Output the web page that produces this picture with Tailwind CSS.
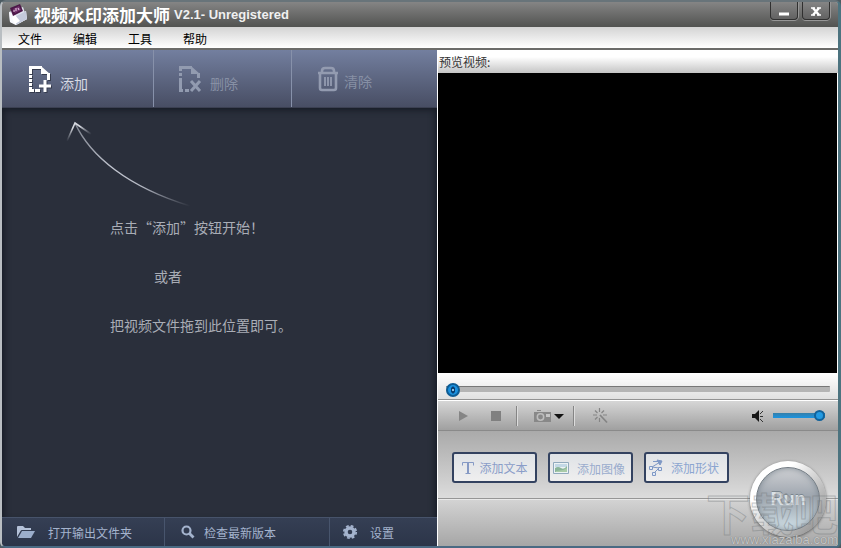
<!DOCTYPE html>
<html lang="zh-CN">
<head>
<meta charset="utf-8">
<meta name="viewport" content="width=device-width, initial-scale=1">
<title>视频水印添加大师 V2.1- Unregistered</title>
<script src="https://cdn.jsdelivr.net/npm/@tailwindcss/browser@4"></script>
</head>
<body class="bg-[#4c5b62] font-['Noto_Sans_CJK_SC','Liberation_Sans',sans-serif] text-xs">
<div class="relative flex min-h-screen flex-col overflow-hidden rounded-md border-t-2 border-r-3 border-b-2 border-l-2 border-t-[#68747a] border-r-[#4c737f] border-b-[#4a6a83] border-l-[#b9bec2] bg-[#b0b0b0]">

  <!-- Title bar -->
  <header class="flex h-[25px] items-center bg-linear-to-b from-[#858585] to-[#525351] pl-1 text-white">
    <svg class="mr-1 size-6" viewBox="0 0 24 24" aria-hidden="true">
      <path d="M3 9 17 4l4 12-11 6-6-3z" fill="#dfe3ee"/>
      <path d="m3 9 7 4 10-5 1 8-11 6-6-3z" fill="#f7f8fc"/>
      <path d="m10 13 10-5 1 8-11 6z" fill="#c4cadb"/>
      <path d="m6 15 3-3 5 6-5 3z" fill="#fff"/>
      <path d="M4 5 14 1l3 7-10 5z" fill="#4c1748"/>
      <path d="m7 6 6-3 2 4-6 3z" fill="#75346f"/>
      <path d="M8 7v2m2-4v3m2-3 1 2" stroke="#e9cde6" fill="none"/>
    </svg>
    <h1 class="flex grow items-center gap-1 font-bold whitespace-nowrap"><span class="text-[17px] leading-6">视频水印添加大师</span><span class="font-['Liberation_Sans',sans-serif] text-[13px] text-[#f0f0f0]">V2.1- Unregistered</span></h1>
    <div class="mr-2 flex gap-1 self-start">
      <button aria-label="最小化" class="flex h-[18px] w-7 items-center justify-center rounded-b border border-t-0 border-[#303030] bg-linear-to-b from-[#858585] to-[#626262] shadow-[0_1px_0_#969696,1px_0_0_#969696]">
        <svg class="size-3" viewBox="0 0 12 12"><path d="M1 9h10" stroke="#fff" stroke-width="3"/></svg>
      </button>
      <button aria-label="关闭" class="flex h-[18px] w-7 items-center justify-center rounded-b border border-t-0 border-[#303030] bg-linear-to-b from-[#858585] to-[#626262] shadow-[0_1px_0_#969696,1px_0_0_#969696]">
        <svg class="size-3" viewBox="0 0 12 12"><path d="m3 3 6 7M9 3 3 10" stroke="#fff" stroke-width="2.4"/><path d="M1 3h4m2 0h4M1 10h4m2 0h4" stroke="#fff" stroke-width="1.4"/></svg>
      </button>
    </div>
  </header>

  <!-- Menu -->
  <nav class="flex h-[23px] items-center border-b-2 border-[#6b6b69] bg-linear-to-b from-[#d4d4d4] to-white pl-4 text-black">
    <button class="w-[55px] pt-[2px] text-left leading-4">文件</button>
    <button class="w-[55px] pt-[2px] text-left leading-4">编辑</button>
    <button class="w-[55px] pt-[2px] text-left leading-4">工具</button>
    <button class="w-[55px] pt-[2px] text-left leading-4">帮助</button>
  </nav>

  <main class="grid grow grid-cols-[435fr_401fr]">
    <!-- File list -->
    <section class="flex flex-col bg-[#2a2f3b]">
      <div class="grid h-[58px] grid-cols-[152fr_138fr_145fr] border-b border-[#3b4052] bg-linear-to-b from-[#737f9f] to-[#484e64] text-sm">
        <button class="flex items-center gap-2 border-r border-[#8791aa] pl-[26px] text-[#d6d9e3]">
          <svg class="h-7 w-6 drop-shadow-[1px_1px_0_#353b4d]" viewBox="0 0 24 28" fill="none" stroke="#fff" stroke-width="3" aria-hidden="true">
            <path d="M14 2.500H2.500v23" stroke-dasharray="18 1 3 1 3 1 3 1"/><path d="M1 25.500h11" stroke-dasharray="5 1"/>
            <path d="m13 1 9 8h-9z" fill="#fff" stroke="none"/><path d="M20.500 8v7"/><path d="M17 15v12M11 21h12"/>
          </svg>
          <span class="pt-2 leading-5">添加</span>
        </button>
        <button class="flex items-center gap-2 border-r border-[#8791aa] pl-6 text-[#8790a5]" disabled>
          <svg class="h-7 w-6" viewBox="0 0 24 28" fill="none" stroke="#929bb0" stroke-width="3" aria-hidden="true">
            <path d="M14 2.500H2.500v23" stroke-dasharray="15 2 3 2"/><path d="M1 25.500h10" stroke-dasharray="4 2"/>
            <path d="m13 1 9 8h-9z" fill="#929bb0" stroke="none"/><path d="M20.500 8v5"/><path d="m13 16 9 10m0-10-9 10"/>
          </svg>
          <span class="pt-2 leading-5">删除</span>
        </button>
        <button class="flex items-center gap-1 pl-6 text-[#8790a5]" disabled>
          <svg class="h-7 w-6" viewBox="0 0 24 28" fill="none" stroke="#939bb0" stroke-width="2.600" aria-hidden="true">
            <path d="M2 8h20M4 8v15q0 2 2 2h12q2 0 2-2V8M6 8V6q0-3 3-3h6q3 0 3 3v2"/><path d="M9 12v9m3-9v9m3-9v9" stroke-width="1.800"/>
          </svg>
          <span class="pt-1 leading-5">清除</span>
        </button>
      </div>
      <div class="grow pt-3 text-sm text-[#a9adb6] shadow-[inset_6px_6px_6px_-4px_#171c26,inset_-6px_0_6px_-4px_#171c26]">
        <svg class="ml-16 h-[89px] w-32" viewBox="0 0 128 89" fill="none" aria-hidden="true">
          <defs>
            <linearGradient id="tail" gradientUnits="userSpaceOnUse" x1="10" y1="4" x2="124" y2="86"><stop offset="0" stop-color="#b8bdc8" stop-opacity=".6"/><stop offset=".4" stop-color="#c2c6d0"/><stop offset=".65" stop-color="#b0b4bf"/><stop offset="1" stop-color="#b0b4bf" stop-opacity="0"/></linearGradient>
            <radialGradient id="tip" gradientUnits="userSpaceOnUse" cx="9" cy="3" r="20"><stop offset=".3" stop-color="#d5d8df"/><stop offset="1" stop-color="#a9adb6" stop-opacity="0"/></radialGradient>
          </defs>
          <path d="M9 3C24 36 62 67 124 86" stroke="url(#tail)" stroke-width="1.500"/>
          <path d="M1 21 9 3l16 11" stroke="url(#tip)" stroke-width="1.600"/>
        </svg>
        <div class="flex flex-col gap-[29px] pt-2 pl-[108px] leading-5 whitespace-nowrap">
          <p>点击“添加”按钮开始！</p>
          <p class="pl-11">或者</p>
          <p>把视频文件拖到此位置即可。</p>
        </div>
      </div>
      <footer class="grid h-[29px] grid-cols-[163fr_165fr_107fr] border-t border-[#47536a] bg-linear-to-b from-[#353f54] to-[#2c3549] text-[#a4b3cd]">
        <button class="flex items-center gap-3 border-r border-[#48556d] pl-[14px]">
          <svg class="h-4 w-5" viewBox="0 0 20 16" aria-hidden="true"><path d="M1 13V3q0-1 1-1h5l2 2h6v2H6q-1 0-1.500 1z" fill="#b4c1d8"/><path d="M6 7h13l-4 7H2z" fill="#9badca"/></svg>
          <span class="pt-[2px] leading-4">打开输出文件夹</span>
        </button>
        <button class="flex items-center gap-2 border-r border-[#48556d] pl-[15px]">
          <svg class="size-4" viewBox="0 0 16 16" fill="none" stroke="#a4b3cd" aria-hidden="true"><circle cx="6.500" cy="6.500" r="4" stroke-width="2.200"/><path d="m9.500 9.500 4 4" stroke-width="2.800"/></svg>
          <span class="pt-[2px] leading-4">检查最新版本</span>
        </button>
        <button class="flex items-center gap-3 pl-3">
          <svg class="size-4" viewBox="0 0 16 16" fill="none" stroke="#a4b3cd" aria-hidden="true"><circle cx="8" cy="8" r="4" stroke-width="3.400"/><circle cx="8" cy="8" r="6.200" stroke-width="1.800" stroke-dasharray="2.800 2.070"/></svg>
          <span class="pt-[2px] leading-4">设置</span>
        </button>
      </footer>
    </section>

    <!-- Preview -->
    <section class="flex flex-col border-l border-white">
      <h2 class="flex h-[23px] items-center bg-linear-to-b from-white from-30% to-[#c5c5c5] pl-px leading-4 text-[#333]"><span class="pt-px">预览视频:</span></h2>
      <div class="min-h-[300px] grow border-r border-white bg-black" role="img" aria-label="预览视频"></div>
      <div class="flex h-[27px] items-center border-b border-[#929292] bg-linear-to-b from-white to-[#e0e0e0] pt-[6px] pr-2 pl-2">
        <input type="range" aria-label="播放进度" min="0" max="100" value="0" class="h-4 w-full appearance-none bg-transparent [&::-webkit-slider-runnable-track]:h-[6px] [&::-webkit-slider-runnable-track]:rounded-[1px] [&::-webkit-slider-runnable-track]:border-t [&::-webkit-slider-runnable-track]:border-[#777] [&::-webkit-slider-runnable-track]:bg-[#b4b4b4] [&::-webkit-slider-thumb]:mt-[-4px] [&::-webkit-slider-thumb]:size-[14px] [&::-webkit-slider-thumb]:appearance-none [&::-webkit-slider-thumb]:rounded-full [&::-webkit-slider-thumb]:border-2 [&::-webkit-slider-thumb]:border-[#0d5c94] [&::-webkit-slider-thumb]:bg-[radial-gradient(ellipse_3px_5px,#b5e4ff_15%,#073d70_35%,#073d70_60%,#1b91df_80%)]">
      </div>
      <div class="flex h-[31px] items-center border-t border-b border-t-white border-b-[#8a8a8a] bg-linear-to-b from-[#d6d6d6] to-[#a0a0a0] pr-[13px] pl-[17px]">
        <button aria-label="播放" class="w-8 pl-1" disabled><svg class="size-3" viewBox="0 0 12 12"><path d="M0 1v10l9-5z" fill="#858585"/></svg></button>
        <button aria-label="停止" class="w-[29px] pl-1" disabled><svg class="size-3" viewBox="0 0 12 12"><path d="M0 1h10v10H0z" fill="#808080"/></svg></button>
        <span class="h-5 w-[2px] border-l border-[#858585] bg-[#dcdcdc]"></span>
        <button aria-label="截图" class="flex w-[55px] items-center pl-4">
          <svg class="h-4 w-[18px]" viewBox="0 0 18 16"><path d="M3 2h4v1H3zM0 4h17v10H0z" fill="#888"/><circle cx="6.500" cy="9" r="3.200" fill="none" stroke="#bdbdbd" stroke-width="1.500"/><path d="M12 6h4v3h-4z" fill="#c5c5c5"/></svg>
          <svg class="ml-[2px] h-2 w-[10px]" viewBox="0 0 10 8"><path d="M0 2h10L5 7z" fill="#111"/></svg>
        </button>
        <span class="h-5 w-[2px] border-l border-[#858585] bg-[#dcdcdc]"></span>
        <button aria-label="效果" class="pl-4"><svg class="size-5" viewBox="0 0 20 20" fill="none" stroke="#858585" stroke-width="1.200"><path d="M8.500 2v4m0 6v4M2 9h4m6 0h4M4 4.500 6.500 7m4 0L13 4.500m-9 9L6.500 11"/><path d="m9 9 7 7.500" stroke-width="1.800"/></svg></button>
        <span class="grow"></span>
        <svg class="mr-2 h-4 w-[14px]" viewBox="0 0 14 16" aria-hidden="true"><path d="M1 6h3l4-4v12l-4-4H1z" fill="#171717"/><path d="m9 6 3-3M9 8.500h3M9 11l3 3" stroke="#333" fill="none"/></svg>
        <input type="range" aria-label="音量" min="0" max="100" value="100" class="h-4 w-[52px] appearance-none bg-transparent [&::-webkit-slider-runnable-track]:h-[5px] [&::-webkit-slider-runnable-track]:bg-linear-to-b [&::-webkit-slider-runnable-track]:from-[#347fa9] [&::-webkit-slider-runnable-track]:to-[#1694e2] [&::-webkit-slider-thumb]:mt-[-3px] [&::-webkit-slider-thumb]:size-[11px] [&::-webkit-slider-thumb]:appearance-none [&::-webkit-slider-thumb]:rounded-full [&::-webkit-slider-thumb]:border-2 [&::-webkit-slider-thumb]:border-[#12629a] [&::-webkit-slider-thumb]:bg-[#239ae2]">
      </div>
      <div class="relative h-[115px] bg-linear-to-b from-[#aaa] to-[#dcdcdc] to-58%">
        <div class="flex h-[68px] gap-[11px] border-b border-[#969696] pt-[21px] pl-[14px]">
          <button class="flex h-[31px] w-[85px] items-center justify-center gap-1 rounded-[3px] border-2 border-[#334260] bg-linear-to-b from-[#dfe2e6] to-[#efefef] text-[#8a9dc8]">
            <svg class="h-4 w-[14px]" viewBox="0 0 14 16" fill="none" stroke="#8599c4" aria-hidden="true"><path d="M1.500 5.500v-3h11v3M7 2v12M4.500 13.500h5"/><path d="M7 2v12" stroke-width="2"/></svg><span class="leading-4">添加文本</span>
          </button>
          <button class="flex h-[31px] w-[85px] items-center justify-between rounded-[3px] border-2 border-[#334260] bg-linear-to-b from-[#dfe2e6] to-[#efefef] pr-[6px] pl-[3px] text-[#9aaccd]">
            <svg class="h-4 w-4" viewBox="0 0 16 16" aria-hidden="true"><path d="M.5 2.500h15v11H.5z" fill="#edf3f5" stroke="#91a9bd"/><path d="M2 4h12v3H2z" fill="#c3d8e6"/><path d="M2 8q3-2 6 0t6-2v6H2z" fill="#8ab59a"/><path d="m3 11 7-1 4-2v4H3z" fill="#a9cba8"/></svg><span class="pt-[2px] leading-4">添加图像</span>
          </button>
          <button class="flex h-[31px] w-[85px] items-center gap-2 rounded-[3px] border-2 border-[#334260] bg-linear-to-b from-[#dfe2e6] to-[#efefef] pl-[3px] text-[#8ba5d0]">
            <svg class="h-[18px] w-[14px]" viewBox="0 0 14 18" fill="none" stroke="#7e98c5" aria-hidden="true"><path d="M4 2.500h8L3 8l7 1-5 5"/><path d="m8 1 5 1-2 4z" fill="#7e98c5"/><path d="M.5 7.500h3v3h-3zM9.500 8.500h3v3h-3zM3.500 13.500h3v3h-3z" fill="#e4ebf6"/></svg><span class="leading-4">添加形状</span>
          </button>
        </div>
        <div class="h-[47px] border-t border-[#e9e9e9] bg-linear-to-b from-[#d3d3d3] to-[#a6a6a6]"></div>
        <button class="absolute right-3 bottom-[9px] size-[76px] rounded-full bg-linear-to-br from-white from-30% via-[#d8d8d8] to-[#858585] p-[6px] shadow-[0_1px_3px_#555]">
          <span class="flex size-full items-center justify-center rounded-full border border-[#727b83] bg-linear-to-b from-[#d0d1d4] via-[#9ca4ad] via-48% to-[#d2e3eb] font-['Liberation_Sans',sans-serif] text-lg font-bold text-[#dce2e6] shadow-[inset_0_0_6px_#7d8993] [text-shadow:0_-1px_0_#7a858e]">Run</span>
        </button>
        <!-- Site watermark -->
        <div class="pointer-events-none absolute right-0 bottom-0 text-right whitespace-nowrap">
          <p class="text-[44px] leading-[44px] font-bold text-[#c0c5c8]/15 [-webkit-text-stroke:1px_#70757866]">下载吧</p>
          <p class="font-['Liberation_Sans',sans-serif] text-[13px] leading-3 text-[#c4c5c6] [text-shadow:0_0_1px_#666]">www.xiazaiba.com</p>
        </div>
      </div>
    </section>
  </main>
</div>
</body>
</html>
